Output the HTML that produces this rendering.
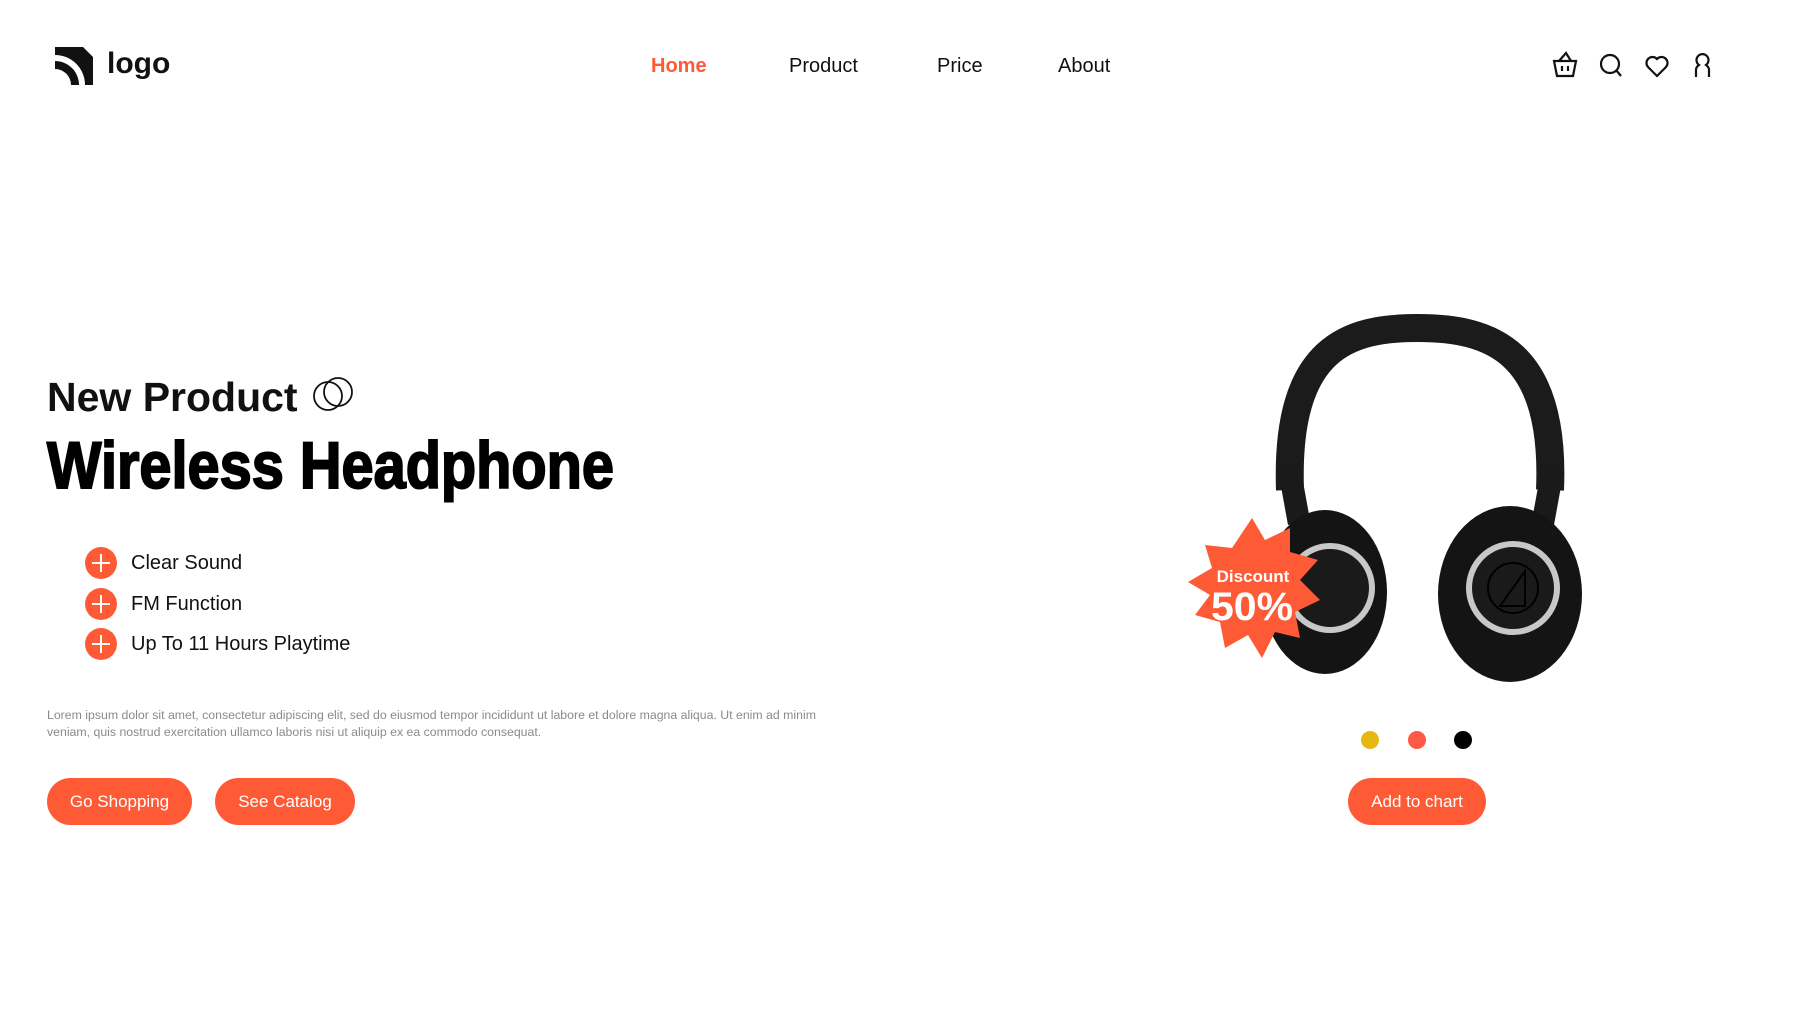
<!DOCTYPE html>
<html><head><meta charset="utf-8"><style>
*{margin:0;padding:0;box-sizing:border-box}
body{width:1800px;height:1012px;background:#fff;position:relative;overflow:hidden;font-family:"Liberation Sans",sans-serif;color:#111}
.abs{position:absolute}
.nav{top:55px;font-size:20px;color:#111}
.btn{position:absolute;background:#ff5a36;color:#fff;border-radius:24px;height:47px;top:778px;font-size:17px;display:flex;align-items:center;justify-content:center}
.feat{position:absolute;left:85px;display:flex;align-items:center;font-size:20px}
.plus{width:32px;height:32px;border-radius:50%;background:#ff5a36;position:relative;margin-right:14px}
.plus:before{content:"";position:absolute;left:7px;right:7px;top:15px;height:2px;background:#fff}
.plus:after{content:"";position:absolute;top:7px;bottom:7px;left:15px;width:2px;background:#fff}
</style></head><body>
<svg class="abs" style="left:50px;top:42px" width="50" height="45" viewBox="0 0 50 45">
<path d="M5 5 L33 5 L43 15 L43 43 L35 43 A30 30 0 0 0 5 13 Z" fill="#111"/>
<path d="M5 19 A24 24 0 0 1 29 43 L21 43 A16 16 0 0 0 5 27 Z" fill="#111"/>
</svg>
<div class="abs" style="left:107px;top:47px;font-size:30px;font-weight:bold">logo</div>
<div class="abs nav" style="left:651px;color:#ff5a36;font-weight:bold">Home</div>
<div class="abs nav" style="left:789px">Product</div>
<div class="abs nav" style="left:937px">Price</div>
<div class="abs nav" style="left:1058px">About</div>
<svg class="abs" style="left:1550px;top:50px" width="170" height="30" viewBox="0 0 170 30" fill="none" stroke="#111" stroke-width="2.2">
<path d="M4 11 H26 L23 26 H7 Z M9 11 L16 3 L21 11 M12 16 V21 M18 16 V21"/>
<circle cx="60" cy="14" r="9"/><path d="M66 20 L71 26"/>
<path d="M107 26 L98 17 A5.5 5.5 0 0 1 107 9 A5.5 5.5 0 0 1 116 17 Z"/>
<path d="M146 27 V20 Q146 17 149 15 A6 6 0 1 1 156 15 Q159 17 159 20 V27"/>
</svg>
<div class="abs" style="left:47px;top:374px;font-size:41px;font-weight:bold">New Product</div>
<svg class="abs" style="left:310px;top:374px" width="50" height="40"><circle cx="18" cy="22" r="14" fill="none" stroke="#111" stroke-width="1.8"/><circle cx="28" cy="18" r="14" fill="none" stroke="#111" stroke-width="1.8"/></svg>
<svg class="abs" style="left:44px;top:425px" width="580" height="85"><text x="3" y="63" font-family="Liberation Sans, sans-serif" font-weight="bold" font-size="66" textLength="567" lengthAdjust="spacingAndGlyphs" fill="#000" stroke="#000" stroke-width="2">Wireless Headphone</text></svg>
<div class="feat" style="top:547px"><div class="plus"></div>Clear Sound</div>
<div class="feat" style="top:588px"><div class="plus"></div>FM Function</div>
<div class="feat" style="top:628px"><div class="plus"></div>Up To 11 Hours Playtime</div>
<div class="abs" style="left:47px;top:707px;width:810px;font-size:12.3px;line-height:17px;color:#8a8a8a">Lorem ipsum dolor sit amet, consectetur adipiscing elit, sed do eiusmod tempor incididunt ut labore et dolore magna aliqua. Ut enim ad minim<br>veniam, quis nostrud exercitation ullamco laboris nisi ut aliquip ex ea commodo consequat.</div>
<div class="btn" style="left:47px;width:145px">Go Shopping</div>
<div class="btn" style="left:215px;width:140px">See Catalog</div>
<div class="btn" style="left:1348px;width:138px">Add to chart</div>
<svg class="abs" style="left:1350px;top:730px" width="130" height="22"><circle cx="20" cy="10" r="9" fill="#e6b812"/><circle cx="67" cy="10" r="9" fill="#ff5a45"/><circle cx="113" cy="10" r="9" fill="#000"/></svg>
<svg class="abs" style="left:1170px;top:300px" width="430" height="400" viewBox="1170 300 430 400">
<path d="M1290 490 C1285 345 1350 328 1418 328 C1490 328 1556 350 1550 490" fill="none" stroke="#1b1b1b" stroke-width="28"/>
<path d="M1278 470 L1300 465 L1310 520 L1288 525 Z" fill="#1a1a1a"/>
<path d="M1542 465 L1564 470 L1554 525 L1532 520 Z" fill="#1a1a1a"/>
<ellipse cx="1325" cy="592" rx="62" ry="82" fill="#141414"/>
<ellipse cx="1510" cy="594" rx="72" ry="88" fill="#141414"/>
<circle cx="1330" cy="588" r="42" fill="#1a1a1a" stroke="#c8c8c8" stroke-width="6"/>
<circle cx="1513" cy="588" r="44" fill="#1a1a1a" stroke="#c8c8c8" stroke-width="6"/>
<circle cx="1513" cy="588" r="25" fill="none" stroke="#000" stroke-width="2"/>
<path d="M1500 606 L1525 571 V606 Z" fill="none" stroke="#000" stroke-width="2"/>
<polygon fill="#ff5a36" points="1252,518 1265,540 1290,528 1290,552 1318,560 1300,580 1320,600 1295,612 1300,638 1275,632 1262,658 1248,635 1225,648 1220,622 1195,615 1210,595 1188,582 1212,568 1205,545 1232,548"/>
<text x="1253" y="582" text-anchor="middle" font-family="Liberation Sans, sans-serif" font-weight="bold" font-size="17" fill="#fff">Discount</text>
<text x="1252" y="620" text-anchor="middle" font-family="Liberation Sans, sans-serif" font-weight="bold" font-size="40" fill="#fff" textLength="82" lengthAdjust="spacingAndGlyphs">50%</text>
</svg>
</body></html>
